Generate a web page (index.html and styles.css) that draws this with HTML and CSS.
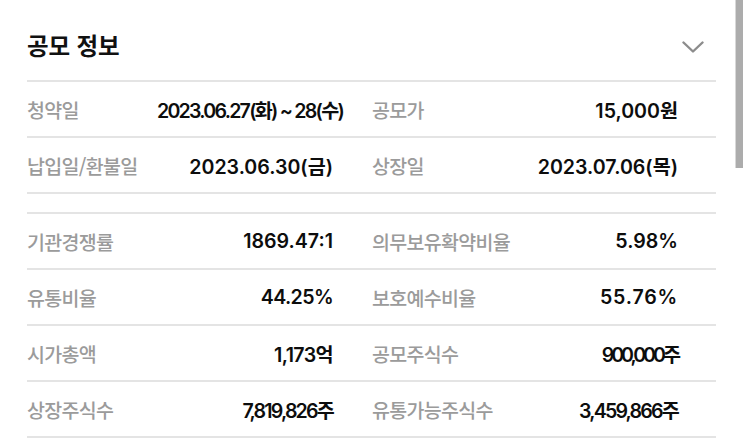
FILE: index.html
```html
<!DOCTYPE html>
<html lang="ko">
<head>
<meta charset="utf-8">
<link rel="stylesheet" href="styles.css">
</head>
<body>
<div class="panel">
  <header class="head">
    <h2 class="title">공모 정보</h2>
    <svg class="chev" width="22" height="12" viewBox="0 0 22 12"><path d="M1.5 1.5 L11 10.5 L20.5 1.5" fill="none" stroke="#8c8c8c" stroke-width="2.4" stroke-linecap="round" stroke-linejoin="round"/></svg>
  </header>
  <div class="group">
    <div class="row">
      <div class="cell"><span class="label">청약일</span><span class="value long">2023.06.27(화) ~ 28(수)</span></div>
      <div class="cell"><span class="label">공모가</span><span class="value">15,000원</span></div>
    </div>
    <div class="row">
      <div class="cell"><span class="label">납입일/환불일</span><span class="value">2023.06.30(금)</span></div>
      <div class="cell"><span class="label">상장일</span><span class="value">2023.07.06(목)</span></div>
    </div>
  </div>
  <div class="group second">
    <div class="row">
      <div class="cell"><span class="label">기관경쟁률</span><span class="value">1869.47:1</span></div>
      <div class="cell"><span class="label">의무보유확약비율</span><span class="value">5.98%</span></div>
    </div>
    <div class="row">
      <div class="cell"><span class="label">유통비율</span><span class="value tight">44.25%</span></div>
      <div class="cell"><span class="label">보호예수비율</span><span class="value wide">55.76%</span></div>
    </div>
    <div class="row">
      <div class="cell"><span class="label">시가총액</span><span class="value tight">1,173억</span></div>
      <div class="cell"><span class="label">공모주식수</span><span class="value narrowest">900,000주</span></div>
    </div>
    <div class="row">
      <div class="cell"><span class="label">상장주식수</span><span class="value narrow">7,819,826주</span></div>
      <div class="cell"><span class="label">유통가능주식수</span><span class="value narrow">3,459,866주</span></div>
    </div>
  </div>
</div>
<div class="scrollbar"></div>
</body>
</html>
```

FILE: styles.css
```css
html, body {
  margin: 0;
  padding: 0;
  background: #ffffff;
  overflow: hidden;
}
body {
  width: 743px;
  height: 444px;
  font-family: Inter, "Noto Sans CJK KR", sans-serif;
  color: #111;
}
.panel {
  width: 689px;
  padding-left: 27px;
}
.head {
  height: 82px;
  box-sizing: border-box;
  padding-top: 10px;
  padding-right: 12px;
  display: flex;
  align-items: center;
  justify-content: space-between;
  border-bottom: 2px solid #e4e4e4;
}
.title {
  margin: 0;
  font-family: "Noto Sans CJK KR", sans-serif;
  font-size: 23.5px;
  font-weight: 700;
  letter-spacing: -0.1px;
  color: #111;
}
.chev {
  display: block;
  margin-top: 4px;
}
.group.second {
  margin-top: 18px;
  border-top: 2px solid #e4e4e4;
}
.row {
  height: 54px;
  display: grid;
  grid-template-columns: 306px 306px;
  column-gap: 39px;
  align-items: center;
  border-bottom: 2px solid #e4e4e4;
}
.cell {
  display: flex;
  justify-content: space-between;
  align-items: center;
  white-space: nowrap;
}
.label {
  font-family: "Noto Sans CJK KR", sans-serif;
  font-size: 19.5px;
  font-weight: 500;
  color: #9b9b9b;
  letter-spacing: -0.7px;
}
.value {
  font-size: 19.6px;
  font-weight: 600;
  color: #0d0d0d;
}
.value.long {
  letter-spacing: -1.75px;
  margin-right: -10px;
}
.value.narrow {
  letter-spacing: -1.8px;
}
.value.narrowest {
  letter-spacing: -3px;
}
.value.tight {
  letter-spacing: -0.6px;
}
.value.wide {
  letter-spacing: 0.8px;
}
.scrollbar {
  position: absolute;
  top: 0;
  left: 735px;
  width: 8px;
  height: 168px;
  background: #acacac;
  border-left: 1px solid #d8d8d8;
  box-sizing: border-box;
}
```
